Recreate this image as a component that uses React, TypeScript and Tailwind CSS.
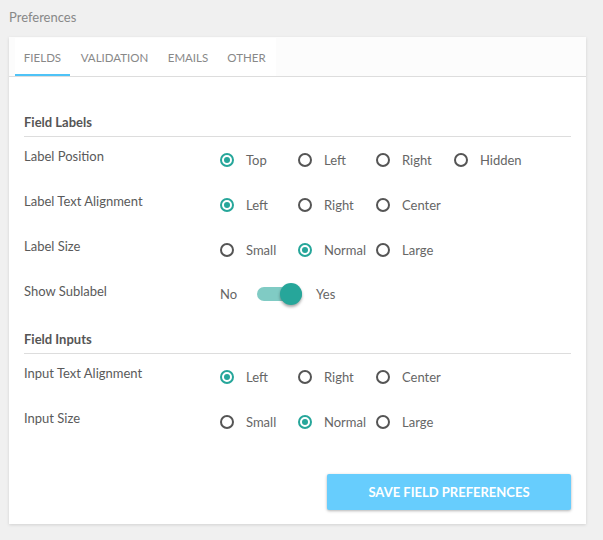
import { useState } from "react";

type Option = { value: string; label: string };

const tabs = [
  { name: "Fields", width: "w-[55px]" },
  { name: "Validation", width: "w-[89px]" },
  { name: "Emails", width: "w-[58px]" },
  { name: "Other", width: "w-[59px]" },
];

function Radio({
  name,
  options,
  value,
  onChange,
}: {
  name: string;
  options: Option[];
  value: string;
  onChange: (v: string) => void;
}) {
  return (
    <div className="flex pt-[4px]">
      {options.map((o) => {
        const checked = o.value === value;
        return (
          <label
            key={o.value}
            className="flex items-center w-[78px] h-[18px] cursor-pointer"
            onClick={() => onChange(o.value)}
          >
            <span
              className={
                checked
                  ? "w-[14px] h-[14px] rounded-full border-2 border-[#26a69a] flex items-center justify-center"
                  : "w-[14px] h-[14px] rounded-full border-2 border-[#555555]"
              }
            >
              {checked && (
                <span className="w-[6px] h-[6px] rounded-full bg-[#26a69a]" />
              )}
            </span>
            <span className="ml-[12px] text-[#666666]">{o.label}</span>
            <input type="radio" name={name} className="hidden" readOnly checked={checked} />
          </label>
        );
      })}
    </div>
  );
}

function Row({ label, children }: { label: string; children: React.ReactNode }) {
  return (
    <div className="flex h-[45px]">
      <div className="w-[196px] text-[#5a5a5a] leading-[18px]">{label}</div>
      <div>{children}</div>
    </div>
  );
}

function Heading({ children, className }: { children: string; className?: string }) {
  return (
    <div
      className={
        "font-bold text-[#555555] leading-[18px] pb-[5px] border-b border-[#dddddd] " +
        (className ?? "")
      }
    >
      {children}
    </div>
  );
}

export default function App() {
  const [activeTab, setActiveTab] = useState("Fields");
  const [labelPosition, setLabelPosition] = useState("top");
  const [labelAlign, setLabelAlign] = useState("left");
  const [labelSize, setLabelSize] = useState("normal");
  const [sublabel, setSublabel] = useState(true);
  const [inputAlign, setInputAlign] = useState("left");
  const [inputSize, setInputSize] = useState("normal");

  const align: Option[] = [
    { value: "left", label: "Left" },
    { value: "right", label: "Right" },
    { value: "center", label: "Center" },
  ];
  const sizes: Option[] = [
    { value: "small", label: "Small" },
    { value: "normal", label: "Normal" },
    { value: "large", label: "Large" },
  ];

  return (
    <div
      className="min-h-screen bg-[#f0f0f0] px-[9px] pt-[8px] text-[13px] leading-[18px]"
      style={{ fontFamily: "Lato, 'Open Sans', sans-serif" }}
    >
      <div className="text-[#888888] mb-[11px]">Preferences</div>

      <div className="w-[577px] bg-white shadow-[0_1px_3px_rgba(0,0,0,0.13)]">
        <div className="h-[40px] bg-[#fcfcfc] border-b border-[#dddddd] pl-[6px] flex">
          <div className="flex bg-white mt-[1px]">
            {tabs.map((t) => (
              <button
                key={t.name}
                onClick={() => setActiveTab(t.name)}
                className={
                  activeTab === t.name
                    ? t.width + " text-center uppercase text-[11.5px] text-[#888888] border-b-2 border-[#4fc3f7] pt-[4px]"
                    : t.width + " text-center uppercase text-[11.5px] text-[#888888] border-b-2 border-transparent pt-[4px]"
                }
              >
                {t.name}
              </button>
            ))}
          </div>
        </div>

        <div className="px-[15px] pt-[36px] pb-[14px]">
          <Heading>Field Labels</Heading>
          <div className="mt-[10px]">
            <Row label="Label Position">
              <Radio
                name="labelPosition"
                value={labelPosition}
                onChange={setLabelPosition}
                options={[
                  { value: "top", label: "Top" },
                  { value: "left", label: "Left" },
                  { value: "right", label: "Right" },
                  { value: "hidden", label: "Hidden" },
                ]}
              />
            </Row>
            <Row label="Label Text Alignment">
              <Radio name="labelAlign" value={labelAlign} onChange={setLabelAlign} options={align} />
            </Row>
            <Row label="Label Size">
              <Radio name="labelSize" value={labelSize} onChange={setLabelSize} options={sizes} />
            </Row>
            <Row label="Show Sublabel">
              <div className="flex items-center h-[26px] -mt-[1px]">
                <span className="text-[#666666]">No</span>
                <button
                  onClick={() => setSublabel(!sublabel)}
                  className="relative ml-[20px] w-[45px] h-[14px] rounded-full bg-[#80cbc4]"
                >
                  <span
                    className={
                      sublabel
                        ? "absolute right-0 top-1/2 -translate-y-1/2 w-[22px] h-[22px] rounded-full bg-[#26a69a] shadow-[0_2px_3px_rgba(0,0,0,0.35)]"
                        : "absolute left-0 top-1/2 -translate-y-1/2 w-[22px] h-[22px] rounded-full bg-[#f1f1f1] shadow-[0_2px_3px_rgba(0,0,0,0.35)]"
                    }
                  />
                </button>
                <span className="ml-[14px] text-[#666666]">Yes</span>
              </div>
            </Row>
          </div>

          <Heading className="mt-[3px]">Field Inputs</Heading>
          <div className="mt-[10px]">
            <Row label="Input Text Alignment">
              <Radio name="inputAlign" value={inputAlign} onChange={setInputAlign} options={align} />
            </Row>
            <Row label="Input Size">
              <Radio name="inputSize" value={inputSize} onChange={setInputSize} options={sizes} />
            </Row>
          </div>

          <div className="flex justify-end mt-[20px]">
            <button className="w-[244px] h-[36px] rounded-[2px] bg-[#67cdfd] text-white font-bold uppercase text-[13px] shadow-[0_1px_3px_rgba(0,0,0,0.3)]">
              Save Field Preferences
            </button>
          </div>
        </div>
      </div>
    </div>
  );
}
